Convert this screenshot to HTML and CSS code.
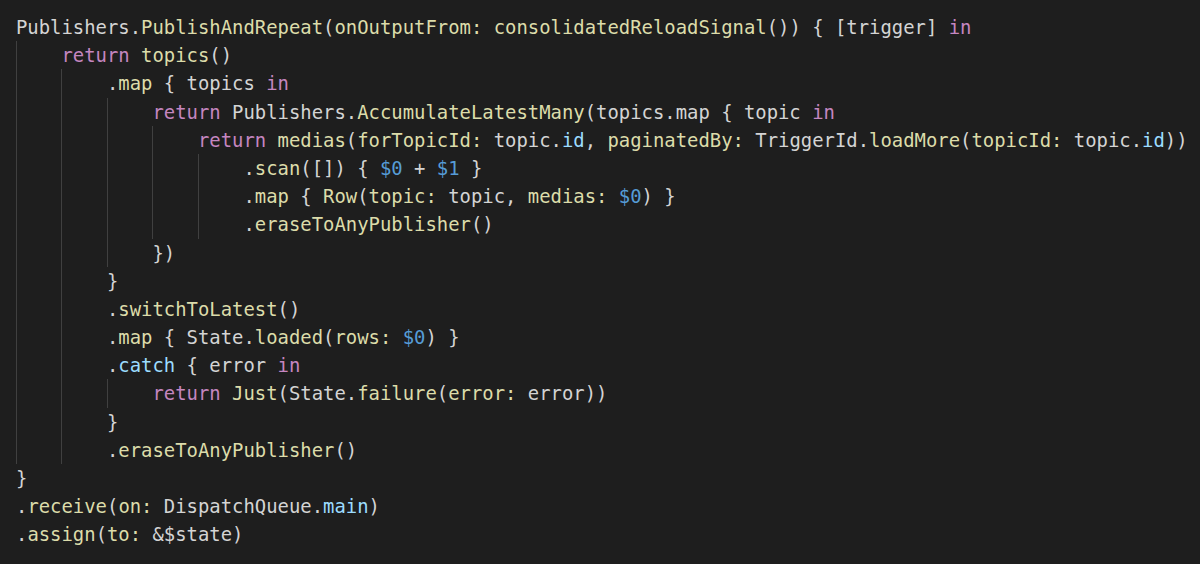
FILE: index.html
```html
<!DOCTYPE html>
<html>
<head>
<meta charset="utf-8">
<link rel="stylesheet" href="styles.css">
</head>
<body>
<div class="editor">
<div class="ln">Publishers.<span class="fn">PublishAndRepeat</span>(<span class="fn">onOutputFrom:</span> <span class="fn">consolidatedReloadSignal</span>()) { [trigger] <span class="kw">in</span></div>
<div class="ln"><span class="ind"></span><span class="kw">return</span> <span class="fn">topics</span>()</div>
<div class="ln"><span class="ind"></span><span class="ind"></span>.<span class="fn">map</span> { topics <span class="kw">in</span></div>
<div class="ln"><span class="ind"></span><span class="ind"></span><span class="ind"></span><span class="kw">return</span> Publishers.<span class="fn">AccumulateLatestMany</span>(topics.map { topic <span class="kw">in</span></div>
<div class="ln"><span class="ind"></span><span class="ind"></span><span class="ind"></span><span class="ind"></span><span class="kw">return</span> <span class="fn">medias</span>(<span class="fn">forTopicId:</span> topic.<span class="pr">id</span>, <span class="fn">paginatedBy:</span> TriggerId.<span class="fn">loadMore</span>(<span class="fn">topicId:</span> topic.<span class="pr">id</span>))</div>
<div class="ln"><span class="ind"></span><span class="ind"></span><span class="ind"></span><span class="ind"></span><span class="ind"></span>.<span class="fn">scan</span>([]) { <span class="vr">$0</span> + <span class="vr">$1</span> }</div>
<div class="ln"><span class="ind"></span><span class="ind"></span><span class="ind"></span><span class="ind"></span><span class="ind"></span>.<span class="fn">map</span> { <span class="fn">Row</span>(<span class="fn">topic:</span> topic, <span class="fn">medias:</span> <span class="vr">$0</span>) }</div>
<div class="ln"><span class="ind"></span><span class="ind"></span><span class="ind"></span><span class="ind"></span><span class="ind"></span>.<span class="fn">eraseToAnyPublisher</span>()</div>
<div class="ln"><span class="ind"></span><span class="ind"></span><span class="ind"></span>})</div>
<div class="ln"><span class="ind"></span><span class="ind"></span>}</div>
<div class="ln"><span class="ind"></span><span class="ind"></span>.<span class="fn">switchToLatest</span>()</div>
<div class="ln"><span class="ind"></span><span class="ind"></span>.<span class="fn">map</span> { State.<span class="fn">loaded</span>(<span class="fn">rows:</span> <span class="vr">$0</span>) }</div>
<div class="ln"><span class="ind"></span><span class="ind"></span>.<span class="pr">catch</span> { error <span class="kw">in</span></div>
<div class="ln"><span class="ind"></span><span class="ind"></span><span class="ind"></span><span class="kw">return</span> <span class="fn">Just</span>(State.<span class="fn">failure</span>(<span class="fn">error:</span> error))</div>
<div class="ln"><span class="ind"></span><span class="ind"></span>}</div>
<div class="ln"><span class="ind"></span><span class="ind"></span>.<span class="fn">eraseToAnyPublisher</span>()</div>
<div class="ln">}</div>
<div class="ln">.<span class="fn">receive</span>(<span class="fn">on:</span> DispatchQueue.<span class="pr">main</span>)</div>
<div class="ln">.<span class="fn">assign</span>(<span class="fn">to:</span> &amp;$state)</div>
</div>
</body>
</html>
```
FILE: styles.css
```css
html, body {
  margin: 0;
  padding: 0;
  background: #1e1e1e;
  height: 100%;
  overflow: hidden;
}
.editor {
  padding: 13px 0 0 16px;
  font-family: "DejaVu Sans Mono", "Liberation Mono", monospace;
  font-size: 18.9px;
  color: #d4d4d4;
}
.ln {
  white-space: pre;
  height: 28.2px;
  line-height: 28.2px;
}
.ind {
  display: inline-block;
  width: 4ch;
  height: 28.2px;
  vertical-align: top;
  box-sizing: border-box;
  border-left: 1px solid #404040;
}
.fn { color: #dcdcaa; }
.kw { color: #c586c0; }
.pr { color: #9cdcfe; }
.vr { color: #569cd6; }
```
